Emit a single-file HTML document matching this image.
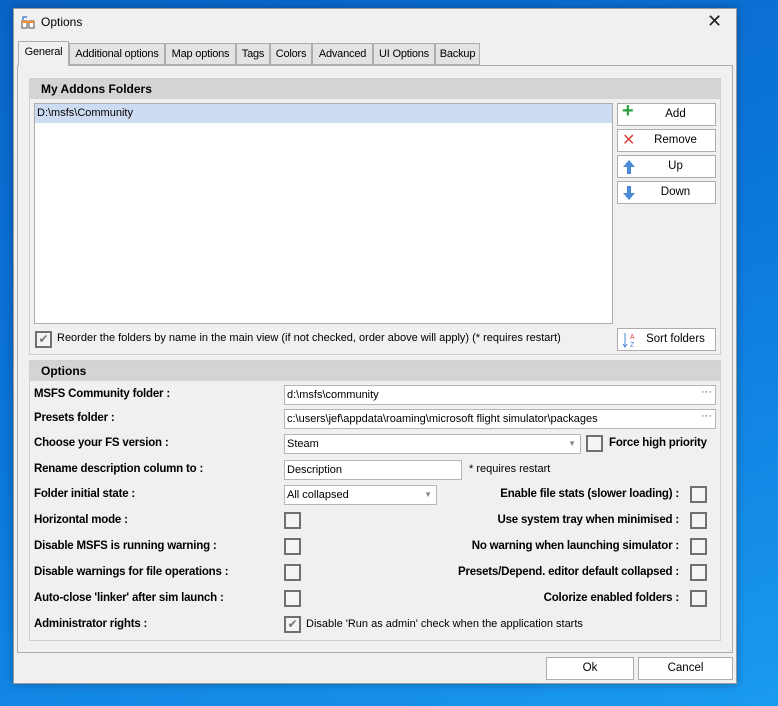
<!DOCTYPE html>
<html><head><style>
*{box-sizing:border-box;margin:0;padding:0}
body{width:778px;height:706px;overflow:hidden;background:linear-gradient(160deg,#0a64c8 0%,#0b78dc 50%,#1a9af0 100%);font-family:"Liberation Sans",sans-serif;font-size:12px;color:#000;position:relative}
.a{position:absolute}
.win{left:13px;top:8px;width:724px;height:676px;background:#f0f0f0;border:1px solid #9a9a9a;box-shadow:0 0 8px rgba(0,0,0,.3)}
.tab{position:absolute;top:43px;height:22px;border:1px solid #adadad;background:#e3e3e3;text-align:center;line-height:20px;font-size:11px;white-space:nowrap;overflow:hidden;letter-spacing:-0.2px}
.tab.sel{top:41px;height:25px;background:#f0f0f0;border-bottom:none;z-index:2}
.page{left:17px;top:65px;width:716px;height:588px;border:1px solid #adadad;background:#f0f0f0}
.grp{border:1px solid #d0d0d0;background:#f0f0f0}
.hdr{background:#d4d4d4;font-weight:bold;padding-left:11px;line-height:20px;height:20px}
.btn{position:absolute;background:#fff;border:1px solid #adadad;text-align:center;line-height:21px;font-size:11.5px}
.inp{position:absolute;background:#fff;border:1px solid #b5b5b5;height:20px;line-height:18px;padding-left:2px;font-size:11px;white-space:nowrap;overflow:hidden}
.cb{position:absolute;width:17px;height:17px;border:2px solid #707070;background:#f4f4f4}
.lb{position:absolute;font-weight:bold;font-size:11.5px;white-space:nowrap;letter-spacing:-0.2px}
.rl{position:absolute;right:99px;font-weight:bold;font-size:11.5px;white-space:nowrap;letter-spacing:-0.2px}
.chk{color:#777;font-size:12px;line-height:13px;text-align:center}
</style></head><body>
<div class="a win"></div>
<svg class="a" style="left:20px;top:14px" width="16" height="16"><path d="M3 6 L3 3 L7 3" fill="none" stroke="#3b6fc4" stroke-width="1.3"/><rect x="2" y="7" width="5" height="7" fill="#fff" stroke="#555"/><rect x="9" y="7" width="5" height="7" fill="#fff" stroke="#555"/><rect x="2" y="7" width="12" height="2" fill="#f28c28"/></svg>
<div class="a" style="left:41px;top:15px;font-size:12px">Options</div>
<div class="a" style="left:707px;top:11px;font-size:18px;color:#222">✕</div>
<div class="a page"></div>
<div class="tab sel" style="left:18px;width:51px">General</div>
<div class="tab" style="left:69px;width:96px">Additional options</div>
<div class="tab" style="left:165px;width:71px">Map options</div>
<div class="tab" style="left:236px;width:34px">Tags</div>
<div class="tab" style="left:270px;width:42px">Colors</div>
<div class="tab" style="left:312px;width:61px">Advanced</div>
<div class="tab" style="left:373px;width:62px">UI Options</div>
<div class="tab" style="left:435px;width:45px">Backup</div>

<div class="a grp" style="left:29px;top:78px;width:692px;height:277px"><div class="hdr">My Addons Folders</div></div>
<div class="a" style="left:34px;top:103px;width:579px;height:221px;background:#fff;border:1px solid #adadad"></div>
<div class="a" style="left:35px;top:104px;width:577px;height:19px;background:#cddcf3;line-height:19px;padding-left:2px;font-size:11px">D:\msfs\Community</div>
<div class="btn" style="left:617px;top:103px;width:99px;height:23px;padding-left:18px"><span class="a" style="left:4px;top:-3px;color:#2e9e3e;font-size:20px;font-weight:bold">+</span>Add</div>
<div class="btn" style="left:617px;top:129px;width:99px;height:23px;padding-left:18px"><span class="a" style="left:4px;top:0;color:#d9453f;font-size:16px">✕</span>Remove</div>
<div class="btn" style="left:617px;top:155px;width:99px;height:23px;padding-left:18px"><svg class="a" style="left:4px;top:3px" width="14" height="16"><path d="M7 1 L13 8 L9 8 L9 15 L5 15 L5 8 L1 8Z" fill="#4a8ad6"/></svg>Up</div>
<div class="btn" style="left:617px;top:181px;width:99px;height:23px;padding-left:18px"><svg class="a" style="left:4px;top:3px" width="14" height="16"><path d="M7 15 L13 8 L9 8 L9 1 L5 1 L5 8 L1 8Z" fill="#4a8ad6"/></svg>Down</div>
<div class="btn" style="left:617px;top:328px;width:99px;height:23px;padding-left:18px"><svg class="a" style="left:4px;top:3px" width="16" height="16"><path d="M3 1 L3 14 M1 12 L3 15 L5 12" stroke="#4a8ad6" fill="none"/><text x="8" y="7" font-size="7" fill="#d9453f" font-family="Liberation Sans">A</text><text x="8" y="15" font-size="7" fill="#4a8ad6" font-family="Liberation Sans">Z</text></svg>Sort folders</div>
<div class="cb chk" style="left:35px;top:331px">✔</div>
<div class="a" style="left:57px;top:332px;font-size:11px">Reorder the folders by name in the main view (if not checked, order above will apply) (* requires restart)</div>

<div class="a grp" style="left:29px;top:360px;width:692px;height:281px"><div class="hdr">Options</div></div>
<div class="lb" style="left:34px;top:388px">MSFS Community folder :</div>
<div class="inp" style="left:284px;top:385px;width:432px">d:\msfs\community<span class="a" style="right:3px;top:-3px;color:#555">···</span></div>
<div class="lb" style="left:34px;top:412px">Presets folder :</div>
<div class="inp" style="left:284px;top:409px;width:432px">c:\users\jef\appdata\roaming\microsoft flight simulator\packages<span class="a" style="right:3px;top:-3px;color:#555;background:#fff">···</span></div>
<div class="lb" style="left:34px;top:437px">Choose your FS version :</div>
<div class="inp" style="left:284px;top:434px;width:297px">Steam<span class="a" style="right:4px;top:0;color:#888;font-size:8px">▼</span></div>
<div class="cb" style="left:586px;top:435px"></div>
<div class="lb" style="left:609px;top:437px">Force high priority</div>
<div class="lb" style="left:34px;top:463px">Rename description column to :</div>
<div class="inp" style="left:284px;top:460px;width:178px">Description</div>
<div class="a" style="left:469px;top:463px;font-size:11px">* requires restart</div>
<div class="lb" style="left:34px;top:488px">Folder initial state :</div>
<div class="inp" style="left:284px;top:485px;width:153px">All collapsed<span class="a" style="right:4px;top:0;color:#888;font-size:8px">▼</span></div>
<div class="rl" style="top:488px">Enable file stats (slower loading) :</div>
<div class="cb" style="left:690px;top:486px"></div>
<div class="lb" style="left:34px;top:514px">Horizontal mode :</div>
<div class="cb" style="left:284px;top:512px"></div>
<div class="rl" style="top:514px">Use system tray when minimised :</div>
<div class="cb" style="left:690px;top:512px"></div>
<div class="lb" style="left:34px;top:540px">Disable MSFS is running warning :</div>
<div class="cb" style="left:284px;top:538px"></div>
<div class="rl" style="top:540px">No warning when launching simulator :</div>
<div class="cb" style="left:690px;top:538px"></div>
<div class="lb" style="left:34px;top:566px">Disable warnings for file operations :</div>
<div class="cb" style="left:284px;top:564px"></div>
<div class="rl" style="top:566px">Presets/Depend. editor default collapsed :</div>
<div class="cb" style="left:690px;top:564px"></div>
<div class="lb" style="left:34px;top:592px">Auto-close 'linker' after sim launch :</div>
<div class="cb" style="left:284px;top:590px"></div>
<div class="rl" style="top:592px">Colorize enabled folders :</div>
<div class="cb" style="left:690px;top:590px"></div>
<div class="lb" style="left:34px;top:618px">Administrator rights :</div>
<div class="cb chk" style="left:284px;top:616px">✔</div>
<div class="a" style="left:306px;top:618px;font-size:11px">Disable 'Run as admin' check when the application starts</div>

<div class="btn" style="left:546px;top:657px;width:88px;height:23px">Ok</div>
<div class="btn" style="left:638px;top:657px;width:95px;height:23px">Cancel</div>
</body></html>
